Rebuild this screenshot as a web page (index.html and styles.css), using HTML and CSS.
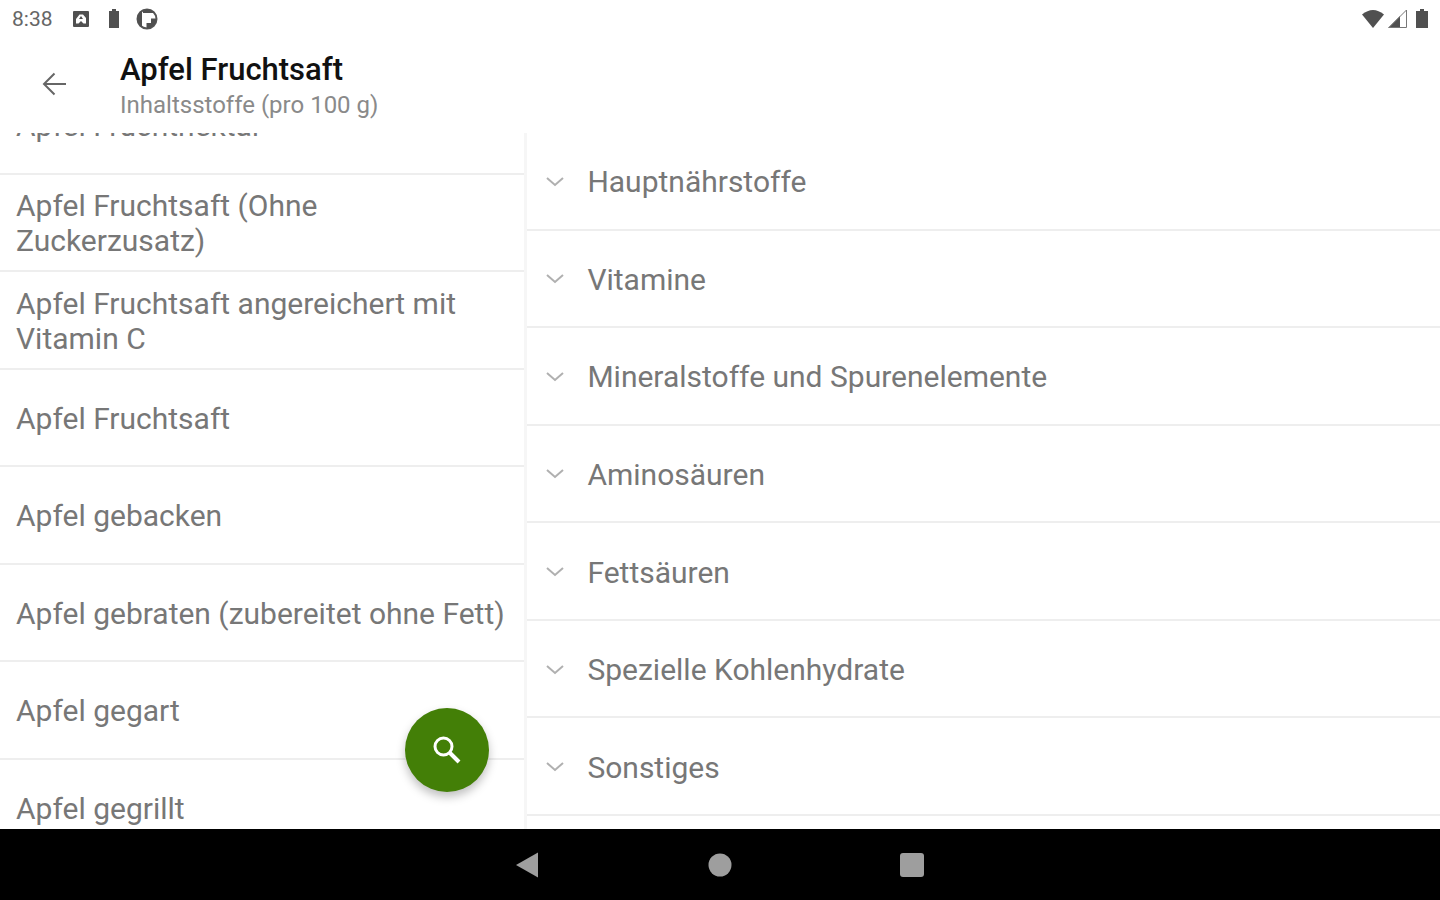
FILE: index.html
```html
<!DOCTYPE html>
<html lang="de">
<head>
<meta charset="utf-8">
<meta name="viewport" content="width=device-width, initial-scale=1">
<title>Apfel Fruchtsaft</title>
<link rel="stylesheet" href="styles.css">
</head>
<body>
<div class="status">
  <div class="status-group">
    <span class="clock">8:38</span>
    <svg class="s-card" width="16" height="16" viewBox="0 0 16 16"><path fill="#505050" fill-rule="evenodd" d="M1 0h14a1 1 0 0 1 1 1v14a1 1 0 0 1-1 1H1a1 1 0 0 1-1-1V1a1 1 0 0 1 1-1zM3 12.500h2.500L8 10l2.500 2.500H13V7L10 3.500H6.500L3 8zM6 8l2-3 2 3z"/></svg>
    <svg class="s-batt" width="12" height="20" viewBox="0 0 12 20"><path fill="#505050" d="M4 0h4v2h3v17H1V2h3z"/></svg>
    <svg width="22" height="22" viewBox="0 0 22 22"><circle cx="11" cy="11" r="9.500" fill="#fff" stroke="#555" stroke-width="2"/><path fill="#505050" d="M10.500 20.500V15h4.500v-4.500h5.500a10 10 0 0 1-10 10zM6 2.500v17A10 10 0 0 1 6 2.500zM7 3C12 0 16 2 18.500 5H7z"/></svg>
  </div>
  <div class="status-group status-right">
    <svg width="22" height="20" viewBox="0 0 22 20"><path fill="#505050" d="M0 5.500Q11-3.500 22 5.500L11 19z"/></svg>
    <svg class="s-signal" width="20" height="20" viewBox="0 0 20 20"><path fill="#505050" d="M0 19L12 7v12z"/><path fill="none" stroke="#777" stroke-width="1" d="M1 18.500L18.500 1v17.500z"/></svg>
    <svg width="12" height="20" viewBox="0 0 12 20"><path fill="#505050" d="M4 0h4v2h4v17H0V2h4z"/></svg>
  </div>
</div>
<header class="appbar">
  <button class="back" type="button" aria-label="Zurück">
    <svg width="24" height="24" viewBox="0 0 24 24" fill="none" stroke="#666" stroke-width="2"><path d="M24 12H2M12.500 1.500L2 12l10.500 10.500"/></svg>
  </button>
  <div>
    <h1 class="title">Apfel Fruchtsaft</h1>
    <p class="subtitle">Inhaltsstoffe (pro 100 g)</p>
  </div>
</header>
<main class="panes">
  <section class="foods">
    <ul class="food-list">
      <li><button type="button">Apfel Fruchtnektar</button></li>
      <li><button type="button">Apfel Fruchtsaft (Ohne Zuckerzusatz)</button></li>
      <li><button type="button">Apfel Fruchtsaft angereichert mit Vitamin C</button></li>
      <li><button type="button">Apfel Fruchtsaft</button></li>
      <li><button type="button">Apfel gebacken</button></li>
      <li><button type="button">Apfel gebraten (zubereitet ohne Fett)</button></li>
      <li><button type="button">Apfel gegart</button></li>
      <li><button type="button">Apfel gegrillt</button></li>
    </ul>
    <button class="fab" type="button" aria-label="Suchen">
      <svg width="28" height="28" viewBox="0 0 28 28" fill="none" stroke="#fff" stroke-width="3"><circle cx="10.500" cy="10.500" r="8.500"/><path stroke-width="4" d="M16.500 16.500l9.500 9.500"/></svg>
    </button>
  </section>
  <section class="groups">
    <ul class="group-list">
      <li><button type="button"><svg class="chev" viewBox="0 0 18 10"><path d="M1 1l8 7 8-7"/></svg>Hauptnährstoffe</button></li>
      <li><button type="button"><svg class="chev" viewBox="0 0 18 10"><path d="M1 1l8 7 8-7"/></svg>Vitamine</button></li>
      <li><button type="button"><svg class="chev" viewBox="0 0 18 10"><path d="M1 1l8 7 8-7"/></svg>Mineralstoffe und Spurenelemente</button></li>
      <li><button type="button"><svg class="chev" viewBox="0 0 18 10"><path d="M1 1l8 7 8-7"/></svg>Aminosäuren</button></li>
      <li><button type="button"><svg class="chev" viewBox="0 0 18 10"><path d="M1 1l8 7 8-7"/></svg>Fettsäuren</button></li>
      <li><button type="button"><svg class="chev" viewBox="0 0 18 10"><path d="M1 1l8 7 8-7"/></svg>Spezielle Kohlenhydrate</button></li>
      <li><button type="button"><svg class="chev" viewBox="0 0 18 10"><path d="M1 1l8 7 8-7"/></svg>Sonstiges</button></li>
    </ul>
  </section>
</main>
<nav class="sysnav">
  <button type="button" aria-label="Zurück"><svg width="26" height="26" viewBox="0 0 26 26"><path fill="#9e9e9e" d="M1 13L23 0.500v25z"/></svg></button>
  <button type="button" aria-label="Startseite"><svg width="26" height="26" viewBox="0 0 26 26"><circle cx="13" cy="13" r="11.500" fill="#9e9e9e"/></svg></button>
  <button type="button" aria-label="Übersicht"><svg width="26" height="26" viewBox="0 0 26 26"><rect x="1" y="1" width="24" height="24" rx="3" fill="#9e9e9e"/></svg></button>
</nav>
</body>
</html>
```

FILE: styles.css
```css
* { box-sizing: border-box; }

body {
  margin: 0;
  height: 100vh;
  display: flex;
  flex-direction: column;
  overflow: hidden;
  background: #fff;
  color: #777;
  font-family: Roboto, "Liberation Sans", sans-serif;
}

button {
  margin: 0;
  padding: 0;
  border: 0;
  background: none;
  color: inherit;
  font: inherit;
  text-align: left;
  cursor: pointer;
}

svg { display: block; flex: none; }

ul { margin: 0; padding: 0; list-style: none; }

.status {
  flex: none;
  height: 38px;
  padding: 0 12px;
  display: flex;
  align-items: center;
  justify-content: space-between;
}

.status-group { display: flex; align-items: center; }
.status-right { gap: 4px; }
.clock { font-size: 21px; line-height: 24px; color: #666; }
.s-card { margin-left: 20px; }
.s-batt { margin: 0 16px 0 19px; }
.s-signal { margin-right: 4px; }

.appbar {
  flex: none;
  height: 95px;
  padding: 0 42px;
  display: flex;
  align-items: center;
  gap: 54px;
}

.back { padding-bottom: 3px; }

.title {
  margin: 0;
  padding-top: 2px;
  font-size: 31px;
  line-height: 36px;
  font-weight: 500;
  color: #111;
}

.subtitle {
  margin: 0;
  font-size: 24px;
  line-height: 34px;
  color: #8a8a8a;
}

.panes { flex: 1; min-height: 0; display: flex; }

.foods {
  position: relative;
  flex: 0 0 calc(36% + 9px);
  overflow: hidden;
  border-right: 3px solid #f6f6f6;
}

.food-list {
  height: 780px;
  margin-top: -56px;
  display: grid;
  grid-template-rows: repeat(8, 1fr);
}

.group-list {
  height: 683px;
  display: grid;
  grid-template-rows: repeat(7, 1fr);
}

.food-list li,
.group-list li {
  display: flex;
  border-bottom: 2px solid #eee;
}

.food-list button,
.group-list button {
  flex: 1;
  padding: 2px 16px 0;
  font-size: 30px;
  line-height: 35px;
}

.groups { flex: 1; overflow: hidden; }

.group-list button {
  display: flex;
  align-items: center;
  gap: 23px;
  padding: 2px 19px 0;
}

.chev {
  width: 18px;
  height: 10px;
  fill: none;
  stroke: #b0b0b0;
  stroke-width: 2;
}

.fab {
  position: absolute;
  right: 35px;
  bottom: 37px;
  width: 84px;
  height: 84px;
  border-radius: 50%;
  background: #437f07;
  display: grid;
  place-items: center;
  box-shadow: 0 5px 10px rgba(0, 0, 0, 0.25);
}

.sysnav {
  flex: none;
  height: 71px;
  background: #000;
  display: flex;
  align-items: center;
  justify-content: center;
  gap: 166px;
}
```
